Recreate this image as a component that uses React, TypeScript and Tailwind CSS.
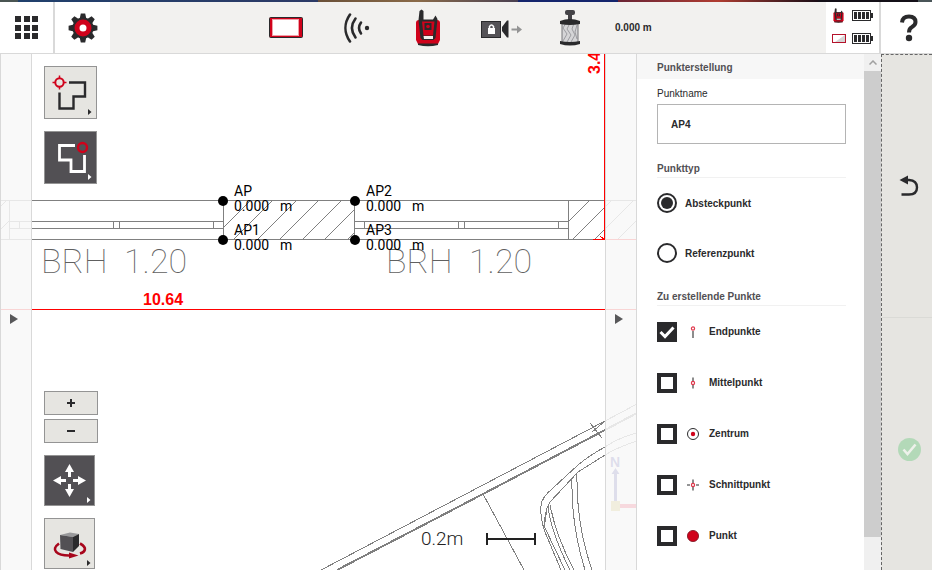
import { useState } from "react";
import type { ReactNode } from "react";

const INK = "#2a2a2c";
const RED = "#d0021b";

function GridIcon() {
  return (
    <svg width="24" height="24" viewBox="0 0 24 24" fill={INK} shapeRendering="crispEdges">
      {[0, 9, 17].map((y) =>
        [0, 9, 17].map((x) => <rect key={`${x}-${y}`} x={x} y={y} width="6" height="6" />)
      )}
    </svg>
  );
}

function GearIcon() {
  return (
    <svg width="30" height="30" viewBox="-15 -15 30 30">
      {[0, 45, 90, 135, 180, 225, 270, 315].map((a) => (
        <path key={a} d="M-3.4 -9 L-2.2 -14.4 H2.2 L3.4 -9 Z" fill={INK} transform={`rotate(${a})`} />
      ))}
      <circle r="10.6" fill={INK} />
      <circle r="6" fill="#fff" stroke={RED} strokeWidth="5" />
    </svg>
  );
}

function TabletIcon() {
  return (
    <svg width="34" height="21" viewBox="0 0 34 21">
      <rect x="0.5" y="0.5" width="33" height="20" rx="1" fill={RED} stroke={INK} />
      <rect x="3.5" y="2.5" width="26" height="16" fill="#fff" stroke="#f0a0a8" strokeWidth="1" />
    </svg>
  );
}

function SignalIcon() {
  return (
    <svg width="26" height="30" viewBox="0 0 26 30" fill="none" stroke={INK} strokeWidth="2.6" strokeLinecap="round">
      <path d="M6 1.5 C0 10 0 20 6 28.5" />
      <path d="M11.5 5.5 C7 11.5 7 18.5 11.5 24.5" />
      <path d="M17 9.5 C14.5 13 14.5 17 17 20.5" />
      <circle cx="23" cy="15" r="2.2" fill={INK} stroke="none" />
    </svg>
  );
}

function StationIcon({ small = false }: { small?: boolean }) {
  return (
    <svg width={small ? 11 : 26} height={small ? 15 : 38} viewBox="0 0 26 38" preserveAspectRatio="none">
      <path d="M1 14 Q1 11 4 11 H22 Q25 11 25 14 V31 L22.5 36 H3.5 L1 31 Z" fill={RED} />
      <path d="M3 34.5 H23 V36 Q13 38.5 3 36 Z" fill={INK} />
      <path d="M4.5 2 L6.5 0.5 L8.5 2 V10.500 H18 L20.500 6.500 L22.500 10 L20.500 29 L18.500 31 H7.500 L5.500 29 L3.500 11 Z" fill={INK} />
      <path d="M7 12.500 H19.500 L18 26.500 H8.500 Z" fill={RED} />
      <rect x="9.500" y="14" width="7" height="7" fill={INK} />
      <circle cx="13" cy="17.500" r="1.800" fill={RED} />
      <path d="M8.500 27 H18 V30 H9 Z" fill="#f2f1ef" />
    </svg>
  );
}

function CameraIcon() {
  return (
    <svg width="50" height="20" viewBox="0 0 50 20" className="ml-1">
      <rect x="5.500" y="3.500" width="19" height="16" fill="#555357" stroke={INK} />
      <path d="M26 9 L31 2.500 H32.500 V19.500 H31 L26 13 Z" fill={INK} />
      <path d="M13.500 10 V8.500 Q15.500 5.500 17.500 8.500 V10" fill="none" stroke="#fff" strokeWidth="1.500" />
      <rect x="12" y="10" width="7" height="6" fill="#fff" />
      <path d="M35.500 11.500 H43" stroke="#949494" strokeWidth="2" />
      <path d="M41 7.500 L46 11.500 L41 15.500 Z" fill="#949494" />
    </svg>
  );
}

function PrismIcon() {
  return (
    <svg width="22" height="38" viewBox="0 0 22 38">
      <rect x="6" y="1" width="10" height="5" rx="2" fill="#444246" />
      <rect x="9" y="5" width="4" height="6" fill="#444246" />
      <rect x="3" y="14" width="16" height="19" fill="#d5d5d7" />
      <path d="M7 14 L4 19 L8 25 L4 32 M11 14 L8 20 L12 26 L8 33 M15 14 L13 20 L16 26 L12 33 M18 16 L16 23 L18 30" fill="none" stroke="#8d8d92" strokeWidth="0.800" />
      <path d="M3 14 V33 M19 14 V33" stroke="#77777a" />
      <path d="M1 12 Q11 8 21 12 V15 Q11 17 1 15 Z" fill={INK} />
      <path d="M1 32 Q11 34 21 32 V35 Q11 38 1 35 Z" fill={INK} />
    </svg>
  );
}

function BatteryIcon() {
  return (
    <svg width="21" height="11" viewBox="0 0 21 11" shapeRendering="crispEdges">
      <rect x="0.500" y="0.500" width="18" height="10" fill="#fff" stroke={INK} />
      <rect x="19" y="3" width="2" height="5" fill={INK} />
      {[2, 6, 10, 14].map((x) => (
        <rect key={x} x={x} y="2" width="3" height="7" fill={INK} />
      ))}
    </svg>
  );
}

function SmallTabletIcon() {
  return (
    <svg width="14" height="9" viewBox="0 0 14 9">
      <rect x="0.500" y="0.500" width="13" height="8" fill="#fff" stroke="#b5122b" />
      <path d="M13 1 V8 H3 Z" fill="#d5d5d5" />
    </svg>
  );
}

function HelpIcon() {
  return (
    <svg width="20" height="28" viewBox="0 0 20 28">
      <path d="M3 8.500 Q3.500 2.500 10 2.500 Q16.500 2.500 16.500 8 Q16.500 11 13 13 Q10 14.500 10 18.500" fill="none" stroke={INK} strokeWidth="4" />
      <circle cx="10" cy="24" r="3.200" fill={INK} />
    </svg>
  );
}

function Header() {
  return (
    <header className="flex h-[52px] shrink-0 border-b border-[#d9d9d9] bg-[#f2f1ef]">
      <button aria-label="Menü" className="flex w-[55px] items-center justify-center border-r-2 border-[#d9d9d9] bg-white">
        <GridIcon />
      </button>
      <button aria-label="Einstellungen" className="flex w-[55px] items-center justify-center bg-white">
        <GearIcon />
      </button>
      <div className="flex min-w-0 flex-1 items-center pl-35">
        {[
          { name: "Tablet", icon: <TabletIcon /> },
          { name: "Verbindung", icon: <SignalIcon /> },
          { name: "Instrument", icon: <StationIcon /> },
          { name: "Kamera", icon: <CameraIcon /> },
          { name: "Prisma", icon: <PrismIcon /> },
        ].map((item) => (
          <button key={item.name} aria-label={item.name} className="flex h-full w-[71px] shrink-0 items-center justify-center">
            {item.icon}
          </button>
        ))}
        <span className="ml-2.5 text-[10px] leading-4 font-bold whitespace-nowrap">0.000 m</span>
      </div>
      <div className="flex w-[53px] flex-col items-center justify-center gap-2.5 bg-white pb-1">
        <div className="flex items-center gap-2">
          <StationIcon small />
          <BatteryIcon />
        </div>
        <div className="flex items-center gap-1.5">
          <SmallTabletIcon />
          <BatteryIcon />
        </div>
      </div>
      <button aria-label="Hilfe" className="flex w-[53px] items-center justify-center border-l-2 border-[#d9d9d9] bg-white pl-1">
        <HelpIcon />
      </button>
    </header>
  );
}

function PlanWindow({ left }: { left: number }) {
  return (
    <g>
      <path d={`M${left} 221.500 h214 M${left} 228.500 h214`} />
      <path d={`M${left + 0.5} 200 v40 M${left + 214.5} 200 v40`} />
      {[10, 104, 110, 204].map((dx) => (
        <path key={dx} d={`M${left + dx + 0.5} 221 v8`} />
      ))}
    </g>
  );
}

function PointLabel({ x, y, name }: { x: number; y: number; name: string }) {
  return (
    <g>
      <circle cx={x} cy={y} r="5" />
      <text x={x + 11} y={y - 5}>{name}</text>
      <text x={x + 11} y={y + 10}>0.000</text>
      <text x={x + 57} y={y + 10}>m</text>
    </g>
  );
}

function Plan() {
  return (
    <svg className="absolute inset-0 h-full w-full" viewBox="0 54 637 516" preserveAspectRatio="xMinYMin slice">
      <defs>
        <clipPath id="walls">
          <path d="M0 200 h9 v40 h-9 Z M223 200 h132 v40 h-132 Z M568 200 h69 v40 h-69 Z" />
        </clipPath>
      </defs>
      <g fill="none" stroke="#808080" shapeRendering="crispEdges">
        <path d="M0 200.500 H637 M0 239.500 H637" />
        <PlanWindow left={9} />
        <PlanWindow left={354} />
        <g clipPath="url(#walls)">
          {[207, 230, 451, 473, 497, 519, 542, 564, 587, 790, 812, 834, 857, 879].map((sum) => (
            <path key={sum} d={`M${sum - 240} 240 L${sum - 200} 200`} />
          ))}
        </g>
        <path d="M321 570 L605 421 L637 404" />
        <path d="M337 570 L483 494 L605 430 L637 413" strokeWidth="2" />
        <path d="M483 494 L524 570" />
        <path d="M590 423 L602 438 M592 432 L605 421" />
        <path d="M637 433 Q620 437 605 447 Q590 455 578 465 L553 488 Q541 498 541 506 Q540 518 545 532 L561 570" />
        <path d="M637 441 Q618 447 605 455 L578 472 L550 502 Q543 514 545 528 L565 570" />
        <path d="M548 505 Q550 530 570 570 M550 505 Q556 536 574 570 M547 508 L545 522" />
        <path d="M572 479 Q571 525 585 570 M577 473 Q576 525 592 570" />
      </g>
      <g fill="none" stroke="#f00" shapeRendering="crispEdges">
        <path d="M0 309.500 H637 M604.500 54 V240 M593 239.500 H637 M600 236 L605 240" />
      </g>
      <g className="font-[Liberation_Sans_Narrow,Liberation_Sans,sans-serif] text-[16px] font-bold" fill="#f00">
        <text x="143" y="305">10.64</text>
        <text transform="translate(600 74) rotate(-90)">3.4</text>
      </g>
      <g className="font-[Roboto,sans-serif] text-[34px] font-thin" fill="#606060">
        <text x="41" y="273">
          BRH <tspan x="124">1.20</tspan>
        </text>
        <text x="386" y="273">
          BRH <tspan x="469">1.20</tspan>
        </text>
      </g>
      <g className="font-[Roboto,sans-serif] text-[14px] font-normal" fill="#000">
        <PointLabel x={223} y={201} name="AP" />
        <PointLabel x={223} y={240} name="AP1" />
        <PointLabel x={355} y={201} name="AP2" />
        <PointLabel x={355} y={240} name="AP3" />
      </g>
      <text x="421" y="545" className="font-[Roboto,sans-serif] text-[19px] font-light" fill="#222">0.2m</text>
      <path d="M487 539 H535 M487 533 V545 M535 533 V545" stroke="#222" strokeWidth="2" fill="none" />
      <g>
        <text x="610" y="467" className="font-[Liberation_Sans,sans-serif] text-[14px] font-bold" fill="#40409f">N</text>
        <path d="M614 506 V474 H611.500 L615.500 468 L619.500 474 H617 V506 Z" fill="#40409f" />
        <rect x="617" y="504" width="20" height="4" fill="#f02040" />
        <rect x="611" y="501" width="9" height="10" fill="#c8b040" />
      </g>
    </svg>
  );
}

function SideTab({ name, side }: { name: string; side: "left" | "right" }) {
  return (
    <button
      aria-label={name}
      className={`absolute inset-y-0 flex w-8 items-start justify-center border-x border-[#d9d9d9] bg-[#f8f8f8]/86 pt-[260px] ${side === "left" ? "left-0" : "right-0"}`}
    >
      <svg width="8" height="10" viewBox="0 0 8 10" className="mr-1" fill="#58585a">
        <path d="M0 0 L8 5 L0 10 Z" />
      </svg>
    </button>
  );
}

function ToolButton({ name, dark = false, large = false, children }: { name: string; dark?: boolean; large?: boolean; children: ReactNode }) {
  return (
    <button
      aria-label={name}
      className={`flex items-center justify-center border border-[#949494] ${large ? "size-[53px]" : "size-[51px]"} ${dark ? "bg-[#525054]" : "bg-[#e6e5e1]"}`}
    >
      <svg width="49" height="49" viewBox="0 0 49 49" fill="none">
        {children}
        <path d="M42 41 L45.500 44 L42 47 Z" fill={dark ? "#fff" : INK} />
      </svg>
    </button>
  );
}

function Toolbar() {
  return (
    <div className="absolute inset-y-0 left-11 flex flex-col justify-between pt-3 pb-px">
      <div className="flex flex-col gap-3">
        <ToolButton name="Startpunkt" large>
          <path d="M23 14.500 H39 V28.500 H27.500 V40.500 H13.500 V24.500" stroke={INK} strokeWidth="2.400" />
          <circle cx="13.500" cy="14.500" r="4.200" stroke={RED} strokeWidth="2" />
          <path d="M13.500 7.500 V11 M13.500 18 V21.500 M6.500 14.500 H10 M17 14.500 H20.500" stroke={RED} strokeWidth="1.500" />
        </ToolButton>
        <ToolButton name="Endpunkt" dark large>
          <path d="M29 12.500 H13.500 V27 H25 V38.500 H38.500 V22" stroke="#fff" strokeWidth="2.800" />
          <circle cx="36.500" cy="14.500" r="4.500" stroke={RED} strokeWidth="2.400" />
        </ToolButton>
      </div>
      <div className="flex flex-col items-start gap-3">
        <div className="flex flex-col gap-1">
          <button aria-label="Vergrößern" className="flex h-6 w-[54px] items-center justify-center border border-[#949494] bg-[#e6e5e1]">
            <svg width="8" height="8" viewBox="0 0 8 8" stroke={INK} strokeWidth="2"><path d="M0 4 H8 M4 0 V8" /></svg>
          </button>
          <button aria-label="Verkleinern" className="flex h-6 w-[54px] items-center justify-center border border-[#949494] bg-[#e6e5e1]">
            <svg width="8" height="8" viewBox="0 0 8 8" stroke={INK} strokeWidth="2"><path d="M0 4 H8" /></svg>
          </button>
        </div>
        <ToolButton name="Verschieben" dark>
          {[0, 90, 180, 270].map((a) => (
            <path key={a} d="M23 21 V16 H20 L24.500 8 L29 16 H26 V21 Z" fill="#fff" transform={`rotate(${a} 24.500 24.500)`} />
          ))}
        </ToolButton>
        <ToolButton name="3D drehen">
          <path d="M14 24.500 C5 31 12 36.500 24 36.500 M35 24.500 C43 29 40 33 35 34.500" stroke="#a8061c" strokeWidth="2.600" />
          <path d="M24 33.500 L33.500 36.500 L24 39.500 Z" fill="#a8061c" />
          <path d="M15 16 L25 13.500 L34 15 L28 18 Z" fill="#99999b" />
          <path d="M15 16 L28 18 V33 L15.500 30 Z" fill="#525054" />
          <path d="M28 18 L34 15 V27 L28 33 Z" fill={INK} />
        </ToolButton>
      </div>
    </div>
  );
}

function SectionTitle({ children }: { children: ReactNode }) {
  return (
    <legend className="block h-[18px] w-full border-b border-[#f1f1f1] leading-[18px] font-bold text-[#525054]">
      {children}
    </legend>
  );
}

const pointKinds: { name: string; icon: ReactNode }[] = [
  {
    name: "Endpunkte",
    icon: (
      <>
        <path d="M6 5 V12" stroke="#8c8c8c" strokeWidth="2" />
        <circle cx="6" cy="2.500" r="1.600" fill="#fff" stroke="#e0384c" strokeWidth="1.200" />
      </>
    ),
  },
  {
    name: "Mittelpunkt",
    icon: (
      <>
        <path d="M6 0.500 V4 M6 8 V11.500" stroke="#8c8c8c" strokeWidth="2" />
        <circle cx="6" cy="6" r="1.600" stroke="#e0384c" strokeWidth="1.200" />
      </>
    ),
  },
  {
    name: "Zentrum",
    icon: (
      <>
        <circle cx="6" cy="6" r="5.500" stroke={INK} />
        <circle cx="6" cy="6" r="2.200" fill={RED} />
      </>
    ),
  },
  {
    name: "Schnittpunkt",
    icon: (
      <>
        <path d="M6 0.500 V4 M6 8 V11.500" stroke="#8c8c8c" strokeWidth="2" />
        <path d="M0 6 H3 M9 6 H12" stroke={INK} />
        <circle cx="6" cy="6" r="1.600" stroke="#e0384c" strokeWidth="1.200" />
      </>
    ),
  },
  { name: "Punkt", icon: <circle cx="6" cy="6" r="5.600" fill={RED} stroke="#7a1320" strokeWidth="0.800" /> },
];

function PointPanel() {
  const [name, setName] = useState("AP4");
  const [type, setType] = useState("Absteckpunkt");
  const [kinds, setKinds] = useState<string[]>(["Endpunkte"]);
  const toggle = (kind: string) =>
    setKinds(kinds.includes(kind) ? kinds.filter((k) => k !== kind) : [...kinds, kind]);

  return (
    <section className="flex w-[244px] shrink-0 bg-white text-[10px]">
      <div className="min-w-0 flex-1 overflow-hidden">
        <h2 className="h-[25px] bg-[#f7f7f7] pl-5 leading-7 font-bold text-[#525054]">Punkterstellung</h2>
        <form className="pt-1.5 pr-[18px] pl-5">
          <label htmlFor="point-name" className="block h-4 leading-[18px]">Punktname</label>
          <input
            id="point-name"
            value={name}
            onChange={(e) => setName(e.target.value)}
            className="mt-[3px] block h-10 w-full border border-[#b4b4b4] px-[13px] font-bold outline-none"
          />
          <fieldset className="mt-4">
            <SectionTitle>Punkttyp</SectionTitle>
            {["Absteckpunkt", "Referenzpunkt"].map((option) => (
              <label key={option} className="flex h-[50px] items-center gap-2 font-bold">
                <input
                  type="radio"
                  name="point-type"
                  checked={type === option}
                  onChange={() => setType(option)}
                  className="size-5 appearance-none rounded-full border-2 border-[#2a2a2c] bg-white bg-clip-content p-0.5 checked:bg-[#2a2a2c]"
                />
                {option}
              </label>
            ))}
          </fieldset>
          <fieldset className="mt-2.5">
            <SectionTitle>Zu erstellende Punkte</SectionTitle>
            {pointKinds.map((kind) => (
              <label key={kind.name} className="flex h-[51px] items-center font-bold">
                <span className="grid">
                  <input
                    type="checkbox"
                    checked={kinds.includes(kind.name)}
                    onChange={() => toggle(kind.name)}
                    className="peer col-start-1 row-start-1 size-5 appearance-none border-4 border-[#2a2a2c] bg-white checked:bg-[#2a2a2c]"
                  />
                  <svg viewBox="0 0 20 20" className="pointer-events-none invisible col-start-1 row-start-1 size-5 peer-checked:visible" fill="none" stroke="#fff" strokeWidth="3">
                    <path d="M3.500 10 L8 14.500 L16.500 5.500" />
                  </svg>
                </span>
                <svg width="12" height="12" viewBox="0 0 12 12" fill="none" className="mx-2.5 shrink-0">
                  {kind.icon}
                </svg>
                {kind.name}
              </label>
            ))}
          </fieldset>
        </form>
      </div>
      <div className="flex w-[17px] flex-col bg-[#f0f0f0]">
        <div className="flex h-[17px] shrink-0 items-center justify-center">
          <svg width="8" height="5" viewBox="0 0 8 5" fill="none" stroke="#a0a0a0" strokeWidth="1.500"><path d="M0.500 4.500 L4 1 L7.500 4.500" /></svg>
        </div>
        <div className="mb-[33px] flex-1 bg-[#cdcdcd]" />
      </div>
    </section>
  );
}

function ActionColumn() {
  return (
    <aside className="flex w-[51px] shrink-0 flex-col overflow-hidden border-t border-l border-dashed border-[#666] bg-[#e6e5e1]">
      <button aria-label="Rückgängig" className="flex h-[263px] shrink-0 items-center justify-center border-b border-solid border-[#dadad6] pl-1">
        <svg width="20" height="22" viewBox="0 0 20 22">
          <path d="M7 5 H10 Q18 5.500 18 12.500 Q18 19.500 10 19.500 H2.500" fill="none" stroke={INK} strokeWidth="2.400" />
          <path d="M0.500 5 L9 0.500 V9.500 Z" fill={INK} />
        </svg>
      </button>
      <button aria-label="Bestätigen" disabled className="flex h-[263px] shrink-0 items-center justify-center pl-1">
        <svg width="23" height="23" viewBox="0 0 23 23" fill="none">
          <circle cx="11.500" cy="11.500" r="11.500" fill="#b3d9b8" />
          <path d="M5.500 11.500 L9.500 16 L17.500 6.500" stroke="#eef1eb" strokeWidth="2.600" />
        </svg>
      </button>
    </aside>
  );
}

export default function App() {
  return (
    <div className="flex h-screen flex-col overflow-hidden bg-white font-[Liberation_Sans,Arial,sans-serif] text-[#2a2a2c]">
      <div className="flex h-0.5 shrink-0">
        <div className="w-[18px] bg-[#4a5552]" />
        <div className="flex-3 bg-linear-to-r from-[#20406c] to-[#2c3a66]" />
        <div className="flex-2 bg-linear-to-r from-[#6a5038] via-[#8a6a48] to-[#4a4050]" />
        <div className="flex-1 bg-[#14246c]" />
        <div className="flex-2 bg-linear-to-r from-[#6a2434] via-[#b03c30] to-[#1a0c14]" />
        <div className="flex-1 bg-[#141018]" />
        <div className="w-3.5 bg-[#4a5558]" />
      </div>
      <Header />
      <div className="flex min-h-0 flex-1">
        <main className="relative min-w-0 flex-1 overflow-hidden">
          <Plan />
          <SideTab name="Linke Leiste" side="left" />
          <SideTab name="Rechte Leiste" side="right" />
          <Toolbar />
        </main>
        <PointPanel />
        <ActionColumn />
      </div>
    </div>
  );
}
